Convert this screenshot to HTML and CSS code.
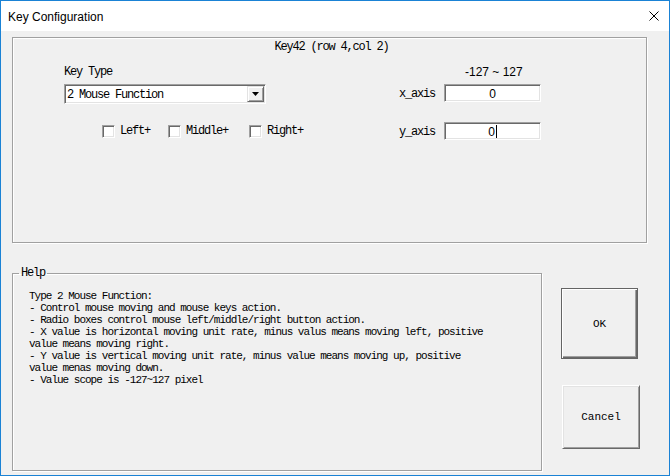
FILE: index.html
```html
<!DOCTYPE html>
<html>
<head>
<meta charset="utf-8">
<title>Key Configuration</title>
<link rel="stylesheet" href="styles.css">
</head>
<body>
<div class="window">
  <div class="titlebar">
    <span class="title">Key Configuration</span>
    <svg class="close" width="10" height="10" viewBox="0 0 10 10"><path d="M0.5 0.5 L9.5 9.5 M9.5 0.5 L0.5 9.5" stroke="#000" stroke-width="1" fill="none"/></svg>
  </div>
  <div class="client">
    <div class="group top">
      <div class="caption">Key42 (row 4,col 2)</div>
      <div class="cols">
        <div class="left">
          <div class="label">Key Type</div>
          <div class="combo">
            <span class="combo-text">2 Mouse Function</span>
            <span class="combo-btn"><svg width="7" height="4" viewBox="0 0 7 4"><path d="M0 0 H7 L3.5 4 Z" fill="#000"/></svg></span>
          </div>
          <div class="checks">
            <div class="check c1"><span class="box"></span><span>Left+</span></div>
            <div class="check c2"><span class="box"></span><span>Middle+</span></div>
            <div class="check c3"><span class="box"></span><span>Right+</span></div>
          </div>
        </div>
        <div class="right">
          <div class="range">-127 ~ 127</div>
          <div class="axis-row"><span class="axis-label">x_axis</span><div class="edit"><span>0</span></div></div>
          <div class="axis-row yrow"><span class="axis-label">y_axis</span><div class="edit"><span>0</span><span class="caret"></span></div></div>
        </div>
      </div>
    </div>
    <div class="bottom">
      <fieldset class="help">
        <legend>Help</legend>
        <p class="help-text">Type 2 Mouse Function:<br>- Control mouse moving and mouse keys action.<br>- Radio boxes control mouse left/middle/right button action.<br>- X value is horizontal moving unit rate, minus valus means moving left, positive<br>value means moving right.<br>- Y value is vertical moving unit rate, minus value means moving up, positive<br>value menas moving down.<br>- Value scope is -127~127 pixel</p>
      </fieldset>
      <div class="buttons">
        <div class="btn default">OK</div>
        <div class="btn cancel">Cancel</div>
      </div>
    </div>
  </div>
</div>
</body>
</html>
```

FILE: styles.css
```css
* { box-sizing: border-box; }
html, body { margin: 0; padding: 0; background: #f0f0f0; }
body { width: 670px; height: 476px; overflow: hidden; }

.window {
  width: 670px;
  height: 476px;
  border: 1px solid #1a82d5;
  display: flex;
  flex-direction: column;
  background: #f0f0f0;
  font-family: "Liberation Mono", monospace;
  font-size: 12px;
  letter-spacing: -1.2px;
  color: #000;
}

.titlebar {
  height: 30px;
  background: #fff;
  display: flex;
  align-items: center;
  padding: 0 10px 0 7px;
  font-family: "Liberation Sans", Arial, sans-serif;
  font-size: 12px;
  letter-spacing: 0;
}
.title { flex: 1; padding-top: 1px; }
.close { display: block; }

.client {
  flex: 1;
  padding: 6px 22px 0 11px;
}

.group.top {
  height: 206px;
  border: 1px solid #a0a0a0;
  box-shadow: inset 1px 1px #fff, 1px 1px #fff;
  padding-top: 3px;
}
.caption {
  height: 12px;
  line-height: 12px;
  text-align: center;
  padding-left: 4px;
}
.cols {
  display: flex;
  margin-top: 13px;
}
.left {
  width: 202px;
  margin-left: 51px;
  flex: none;
}
.label { height: 12px; line-height: 12px; }
.combo {
  margin-top: 6px;
  height: 20px;
  background: #fff;
  border: 1px solid;
  border-color: #a0a0a0 #fff #fff #a0a0a0;
  box-shadow: inset 1px 1px #696969, inset -1px -1px #e3e3e3;
  display: flex;
  align-items: center;
  padding: 1px;
}
.combo-text {
  flex: 1;
  padding-left: 1px;
  line-height: 16px;
  padding-top: 1px;
}
.combo-btn {
  width: 17px;
  height: 16px;
  background: #f0f0f0;
  border: 1px solid;
  border-color: #e3e3e3 #696969 #696969 #e3e3e3;
  box-shadow: inset 1px 1px #fff, inset -1px -1px #a0a0a0;
  display: flex;
  align-items: center;
  justify-content: center;
}
.combo-btn svg { display: block; }

.checks {
  display: flex;
  margin-top: 21px;
  margin-left: 38px;
  height: 13px;
  width: 220px;
}
.check {
  display: flex;
  align-items: center;
  line-height: 13px;
  flex: none;
  white-space: nowrap;
}
.check.c1 { width: 66px; }
.check.c2 { width: 81px; }
.box {
  width: 13px;
  height: 13px;
  background: #fff;
  border: 1px solid;
  border-color: #a0a0a0 #fff #fff #a0a0a0;
  box-shadow: inset 1px 1px #696969, inset -1px -1px #e3e3e3;
  margin-right: 5px;
  flex: none;
}

.right { margin-left: 133px; flex: none; }
.range {
  height: 12px;
  line-height: 12px;
  padding-left: 66px;
  font-family: "Liberation Sans", Arial, sans-serif;
  font-size: 12px;
  letter-spacing: 0;
}
.axis-row {
  display: flex;
  align-items: center;
  margin-top: 6px;
  height: 18px;
}
.axis-row.yrow { margin-top: 20px; }
.axis-label { width: 45px; line-height: 12px; padding-top: 1px; }
.edit {
  width: 97px;
  height: 18px;
  background: #fff;
  border: 1px solid;
  border-color: #a0a0a0 #fff #fff #a0a0a0;
  box-shadow: inset 1px 1px #696969, inset -1px -1px #e3e3e3;
  display: flex;
  align-items: center;
  justify-content: center;
  font-family: "Liberation Sans", Arial, sans-serif;
  font-size: 12px;
  letter-spacing: 0;
  padding-top: 1px;
}
.caret {
  width: 1px;
  height: 13px;
  background: #000;
  margin-left: 1px;
}

.bottom {
  display: flex;
  align-items: flex-start;
  margin-top: 24px;
}
.help {
  margin: 0;
  min-width: 0;
  width: 530px;
  height: 204px;
  border: 1px solid #a0a0a0;
  box-shadow: inset 1px 1px #fff, 1px 1px #fff;
  padding: 0 0 0 16px;
}
.help legend {
  margin-left: -10px;
  padding: 0 2px;
  line-height: 12px;
  height: 12px;
}
.help-text {
  margin: 11px 0 0 0;
  line-height: 12px;
  font-size: 11px;
  letter-spacing: -1px;
  white-space: nowrap;
}

.buttons {
  margin-left: 19px;
  padding-top: 21px;
  display: flex;
  flex-direction: column;
}
.btn {
  display: flex;
  align-items: center;
  justify-content: center;
  background: #f0f0f0;
  letter-spacing: 0;
  font-size: 11px;
}
.btn.default {
  width: 77px;
  height: 71px;
  border: 1px solid #646464;
  box-shadow: inset 1px 1px #fff, inset -1px -1px #696969, inset -2px -2px #a0a0a0;
}
.btn.cancel {
  width: 78px;
  height: 64px;
  margin-top: 26px;
  margin-left: 1px;
  border: 1px solid;
  border-color: #fff #696969 #696969 #fff;
  box-shadow: inset 1px 1px #e3e3e3, inset -1px -1px #a0a0a0;
}
```
